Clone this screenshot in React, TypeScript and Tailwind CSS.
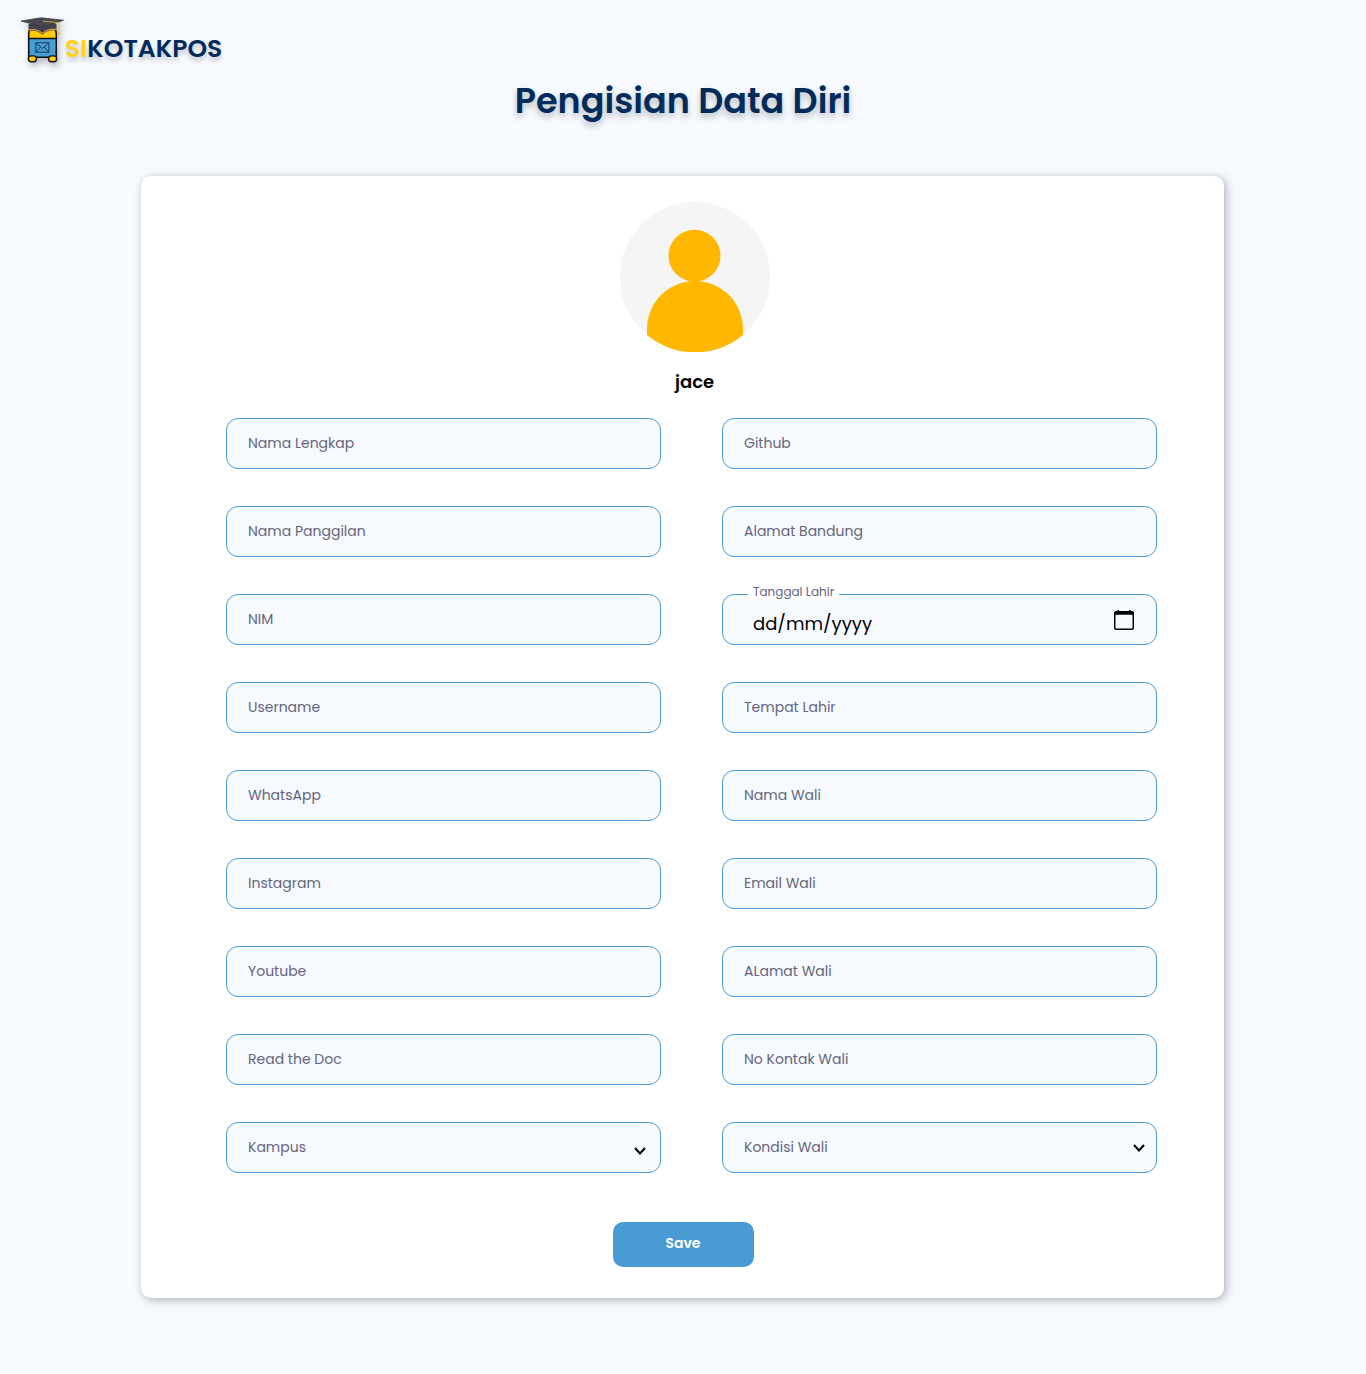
import React from "react";

type Field = { label: string; kind?: "date" | "select"; arrow?: string };

const left: Field[] = [
  { label: "Nama Lengkap" },
  { label: "Nama Panggilan" },
  { label: "NIM" },
  { label: "Username" },
  { label: "WhatsApp" },
  { label: "Instagram" },
  { label: "Youtube" },
  { label: "Read the Doc" },
  { label: "Kampus", kind: "select", arrow: "right-[14px] top-[24px]" },
];

const right: Field[] = [
  { label: "Github" },
  { label: "Alamat Bandung" },
  { label: "Tanggal Lahir", kind: "date" },
  { label: "Tempat Lahir" },
  { label: "Nama Wali" },
  { label: "Email Wali" },
  { label: "ALamat Wali" },
  { label: "No Kontak Wali" },
  { label: "Kondisi Wali", kind: "select", arrow: "right-[11px] top-[21px]" },
];

function FieldBox({ field }: { field: Field }) {
  if (field.kind === "date") {
    return (
      <div className="relative flex h-[51px] items-center justify-between rounded-[12px] border border-[#4a9bd3] bg-[#f6faff] pl-[30px] pr-[22px]">
        <span className="absolute left-[25px] top-[-12px] h-[17px] w-[91px] whitespace-nowrap rounded-[3px] bg-white pl-[5px] text-[12px] leading-[18px] text-[#65657b]">
          {field.label}
        </span>
        <span className="pt-[8px] text-[18px] leading-[28px] text-black">dd/mm/yyyy</span>
        <svg className="h-[20px] w-[20px]" viewBox="0 0 20 20" fill="none">
          <rect x="0.75" y="1.75" width="18.5" height="17.5" rx="1.5" stroke="#000" strokeWidth="1.5" />
          <path d="M0.5 1.5H19.5V4.7H0.5ZM3.5 0H5V2H3.5ZM15 0H16.5V2H15Z" fill="#000" />
        </svg>
      </div>
    );
  }
  return (
    <div className="relative flex h-[51px] items-center rounded-[12px] border border-[#4a9bd3] bg-[#f6faff] px-[21px] pb-[2px]">
      <span className="whitespace-nowrap text-[14px] leading-[20px] text-[#65657b]">{field.label}</span>
      {field.kind === "select" && (
        <svg className={`absolute h-[8px] w-[12px] ${field.arrow}`} viewBox="0 0 12 8" fill="none">
          <path d="M1 1L6 6.5L11 1" stroke="#000" strokeWidth="2" />
        </svg>
      )}
    </div>
  );
}

function LogoMark() {
  return (
    <svg className="h-[52px] w-[46px] drop-shadow-[2px_4px_3px_rgba(0,0,0,0.25)]" viewBox="0 0 46 52" fill="none">
      <path d="M8.7 22V17Q9 10 16 10H29Q36 10 36.3 17V22Z" fill="#ffcb08" stroke="#111" strokeWidth="1.5" />
      <rect x="8.7" y="21.5" width="27.6" height="16" fill="#459ed4" stroke="#111" strokeWidth="1.5" />
      <rect x="8.7" y="35.5" width="27.6" height="4.5" fill="#459ed4" />
      <path d="M8.7 34V40.2H36.3V34" stroke="#111" strokeWidth="1.5" />
      <rect x="8.3" y="38.9" width="8.2" height="5.8" rx="2.9" fill="#ffcb08" stroke="#111" strokeWidth="1.4" />
      <rect x="28.5" y="38.9" width="8.2" height="5.8" rx="2.9" fill="#ffcb08" stroke="#111" strokeWidth="1.4" />
      <rect x="15.8" y="25.8" width="13" height="9.4" stroke="#173b58" />
      <path d="M16 26L22.3 31.5L28.6 26M16 35L20.4 30M28.6 35L24.2 30" stroke="#173b58" />
      <path d="M8.5 7V14.2Q17 12.6 22.3 17.8Q28 12.6 36.5 13.5V7Z" fill="#46424d" />
      <path d="M8.5 13Q17 11.4 22.3 16.3Q28 11.4 36.5 12.3" stroke="#f3be35" strokeWidth="1" />
      <path d="M1 4L21 0.8L43.5 3.2L24 10.2Z" fill="#4b4854" stroke="#34313b" strokeWidth="0.7" />
      <path d="M23 4.2L39 5.6V13" stroke="#e8b72e" strokeWidth="0.8" />
      <path d="M39 11L40.4 17.8H37.8Z" fill="#f1c030" />
    </svg>
  );
}

export default function App() {
  return (
    <div className="flex h-[1374px] w-[1366px] flex-col overflow-hidden bg-[#f6faff] font-[Poppins,Inter,sans-serif]">
      <header className="flex h-[80px] items-start pl-[20px] pt-[17px]">
        <LogoMark />
        <div className="-ml-[1px] pt-[15px] text-[25px] font-semibold leading-[34px] text-[#002b5b] [text-shadow:0_4px_4px_rgba(0,0,0,0.2)]">
          <span className="text-[#ffd21c]">SI</span>KOTAKPOS
        </div>
      </header>
      <h1 className="h-[96px] text-center text-[35px] font-semibold leading-[42px] text-[#002b5b] [text-shadow:0_4px_6px_rgba(0,0,0,0.25)]">
        Pengisian Data Diri
      </h1>
      <main className="ml-[141px] flex h-[1122px] w-[1083px] flex-col rounded-[10px] bg-white pt-[26px] shadow-[2px_2px_10px_rgba(0,0,0,0.3)]">
        <div className="flex h-[216px] flex-col items-center pl-[25px]">
          <svg className="h-[150px] w-[150px]" viewBox="0 0 150 150">
            <circle cx="75" cy="75" r="75" fill="#f5f5f5" />
            <circle cx="74.5" cy="53.7" r="26" fill="#ffb700" />
            <path d="M27 133V127A48 48 0 0 1 123 127V133A75 75 0 0 1 27 133Z" fill="#ffb700" />
          </svg>
          <div className="mr-[1px] pt-[17px] text-[18px] font-semibold leading-[26px] text-black">jace</div>
        </div>
        <div className="grid grid-cols-2 gap-x-[61px] pl-[85px] pr-[67px]">
          {[left, right].map((column, i) => (
            <div key={i} className="flex flex-col gap-[37px]">
              {column.map((field) => (
                <FieldBox key={field.label} field={field} />
              ))}
            </div>
          ))}
        </div>
        <button className="ml-[472px] mt-[49px] h-[45px] w-[141px] rounded-[10px] bg-[#4a9bd3] pb-[2px] pr-[1px] text-[14px] font-semibold text-white">
          Save
        </button>
      </main>
    </div>
  );
}
